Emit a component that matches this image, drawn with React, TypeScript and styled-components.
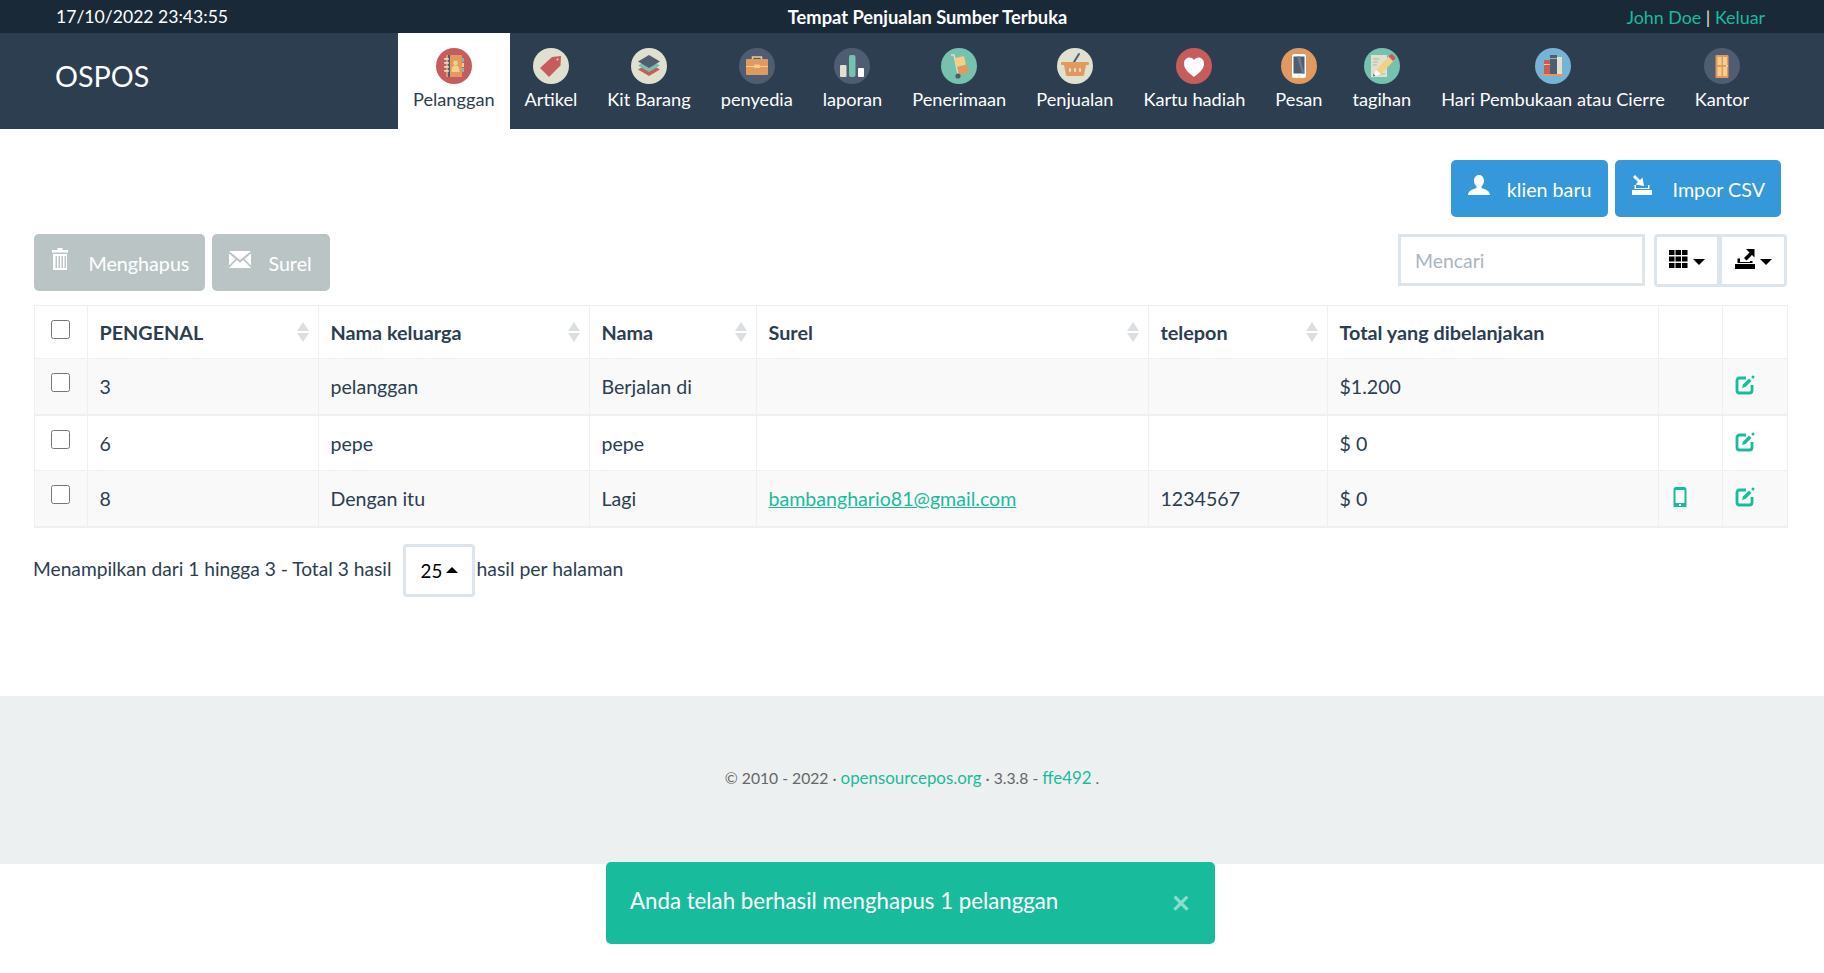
import React, { FunctionComponent, ReactNode } from "react";
import styled, { createGlobalStyle } from "styled-components";

// DATA //
const C = {
    red: "#c75c5c",
    cream: "#e0e0d1",
    slate: "#4f5d73",
    teal: "#76c2af",
    orange: "#e0995e",
    yellow: "#f5cf87",
    blue: "#77b3d4",
    white: "#ffffff",
};

const Badge: FunctionComponent<{ bg: string; children: ReactNode }> = ({ bg, children }) => (
    <svg width="36" height="36" viewBox="0 0 36 36">
        <circle cx="18" cy="18" r="18" fill={bg} />
        {children}
    </svg>
);

const navIcons: { label: string; icon: ReactNode }[] = [
    {
        label: "Pelanggan",
        icon: (
            <Badge bg={C.red}>
                <rect x="25" y="10" width="3" height="4" fill={C.blue} />
                <rect x="25" y="15" width="3" height="4" fill={C.yellow} />
                <rect x="25" y="20" width="3" height="4" fill={C.teal} />
                <rect x="10" y="7" width="16" height="22" rx="1" fill={C.orange} />
                <rect x="12" y="7" width="2" height="22" fill={C.slate} />
                <circle cx="19.5" cy="15" r="2.4" fill={C.yellow} />
                <path d="M15.5 24c0-5 1.5-6.5 4-6.5s4 1.500 4 6.500z" fill={C.yellow} />
                <rect x="8" y="10" width="5" height="1.800" rx=".9" fill={C.cream} />
                <rect x="8" y="14" width="5" height="1.800" rx=".9" fill={C.cream} />
                <rect x="8" y="18" width="5" height="1.800" rx=".9" fill={C.cream} />
                <rect x="8" y="22" width="5" height="1.800" rx=".9" fill={C.cream} />
            </Badge>
        ),
    },
    {
        label: "Artikel",
        icon: (
            <Badge bg={C.cream}>
                <path d="M7 20 19 9l9-1-.5 9.500L16 29z" fill={C.red} />
                <circle cx="24.500" cy="11.500" r="1" fill={C.cream} />
            </Badge>
        ),
    },
    {
        label: "Kit Barang",
        icon: (
            <Badge bg={C.cream}>
                <path d="M7 21.500 18 15l11 6.500L18 28z" fill={C.red} />
                <path d="M7 17.500 18 11l11 6.500L18 24z" fill={C.teal} />
                <path d="M7 13.500 18 7l11 6.500L18 20z" fill={C.slate} />
            </Badge>
        ),
    },
    {
        label: "penyedia",
        icon: (
            <Badge bg={C.slate}>
                <path d="M13.500 12v-3h9v3" fill="none" stroke={C.yellow} strokeWidth="1.500" />
                <rect x="7" y="11" width="22" height="16" rx="1" fill={C.orange} />
                <rect x="7" y="18" width="22" height="1" fill={C.yellow} />
                <rect x="15" y="16.500" width="6" height="3.500" rx="1" fill={C.yellow} />
            </Badge>
        ),
    },
    {
        label: "laporan",
        icon: (
            <Badge bg={C.slate}>
                <rect x="6" y="17" width="6.500" height="12" rx="1" fill={C.cream} />
                <rect x="15" y="7" width="6.500" height="22" rx="2" fill={C.teal} />
                <rect x="24" y="20" width="6" height="9" rx="1" fill={C.white} />
            </Badge>
        ),
    },
    {
        label: "Penerimaan",
        icon: (
            <Badge bg={C.teal}>
                <path d="M10 7h3l4 19" fill="none" stroke={C.cream} strokeWidth="1.300" />
                <rect x="14" y="9" width="10" height="9" rx="1" transform="rotate(-12 19 13)" fill={C.yellow} />
                <rect x="17" y="18" width="10" height="8" rx="1" transform="rotate(-12 22 22)" fill={C.orange} />
                <circle cx="17" cy="28" r="2.600" fill={C.slate} />
            </Badge>
        ),
    },
    {
        label: "Penjualan",
        icon: (
            <Badge bg={C.cream}>
                <path d="M17 14l5-8" stroke={C.slate} strokeWidth="2" strokeLinecap="round" />
                <rect x="4" y="14" width="28" height="3" rx="1" fill={C.orange} />
                <path d="M7 17h22l-2 10a1.500 1.500 0 0 1-1.500 1h-15a1.500 1.500 0 0 1-1.500-1z" fill={C.orange} />
                <rect x="12" y="20" width="2" height="4" rx="1" fill={C.cream} />
                <rect x="17" y="20" width="2" height="4" rx="1" fill={C.cream} />
                <rect x="22" y="20" width="2" height="4" rx="1" fill={C.cream} />
            </Badge>
        ),
    },
    {
        label: "Kartu hadiah",
        icon: (
            <Badge bg={C.red}>
                <path
                    d="M18 29C13 25 8 21.500 8 15.500 8 12 10.500 9.500 13.500 9.500c2 0 3.500 1 4.500 2.500 1-1.500 2.500-2.500 4.500-2.500C25.500 9.500 28 12 28 15.500 28 21.500 23 25 18 29z"
                    fill={C.white}
                />
            </Badge>
        ),
    },
    {
        label: "Pesan",
        icon: (
            <Badge bg={C.orange}>
                <rect x="11" y="6" width="14" height="24" rx="2" fill={C.white} />
                <rect x="12.500" y="8.500" width="11" height="17" fill={C.slate} />
                <path d="M16 8.500h3l4.500 17H21z" fill="#6b7a90" />
                <circle cx="18" cy="28" r=".9" fill={C.cream} />
            </Badge>
        ),
    },
    {
        label: "tagihan",
        icon: (
            <Badge bg={C.teal}>
                <rect x="7" y="7" width="16" height="22" fill={C.cream} />
                <path d="M9 11h6M9 14h5M9 17h4M9 26h12" stroke="#b5b5a5" strokeWidth="1" />
                <path d="M12 22 25 8l5 4.500L17 26z" fill={C.yellow} />
                <path d="M24.500 8.500l2-2a1.500 1.500 0 0 1 2 0l2.500 2.500a1.500 1.500 0 0 1 0 2l-2 2z" fill={C.red} />
                <path d="M12 22l-2.500 6.500L17 26z" fill={C.white} />
                <path d="M9.500 28.500 9 26l2.500 1.500z" fill={C.slate} />
            </Badge>
        ),
    },
    {
        label: "Hari Pembukaan atau Cierre",
        icon: (
            <Badge bg={C.blue}>
                <rect x="9" y="12" width="6" height="14" rx="1" fill={C.red} />
                <rect x="9" y="16" width="6" height="1" fill={C.yellow} />
                <rect x="15" y="7" width="7" height="19" fill={C.slate} />
                <rect x="15" y="10" width="7" height="1" fill={C.teal} />
                <rect x="22" y="9" width="5" height="17" fill={C.cream} />
                <rect x="7" y="26" width="22" height="2" fill={C.orange} />
            </Badge>
        ),
    },
    {
        label: "Kantor",
        icon: (
            <Badge bg={C.slate}>
                <rect x="11.500" y="7" width="13" height="23" rx="1" fill={C.orange} />
                <rect x="13.500" y="9" width="4" height="8" fill={C.yellow} />
                <rect x="19" y="9" width="4" height="8" fill={C.yellow} />
                <rect x="13.500" y="19" width="4" height="9" fill={C.yellow} />
                <rect x="19" y="19" width="4" height="9" fill={C.yellow} />
                <circle cx="23" cy="18" r="1" fill={C.cream} />
            </Badge>
        ),
    },
];

const TrashIcon = () => (
    <svg width="18" height="22" viewBox="0 0 18 22" fill="currentColor">
        <path d="M6.500 0h5v2h5.500v2.500H1V2h5.500z" />
        <path d="M2 6h14v16H2zM4.500 8v12h1.500V8zm3 0v12h1.500V8zm3 0v12H12V8zm3 0v12H15V8z" fillRule="evenodd" />
    </svg>
);
const MailIcon = () => (
    <svg width="22" height="17" viewBox="0 0 22 17" fill="currentColor">
        <path d="M0 0h22L11 9z" />
        <path d="M0 2.500 6.500 8 0 14.500zM22 2.500 15.500 8l6.500 6.500zM7.700 9 11 11.700 14.300 9 22 17H0z" />
    </svg>
);
const UserIcon = () => (
    <svg width="22" height="20" viewBox="0 0 22 20" fill="currentColor">
        <path d="M11 0c3 0 5 2.500 5 5.500 0 2.500-1 4.500-2.500 6v1.500c3 1 8.500 2.500 8.500 7H0c0-4.500 5.500-6 8.500-7v-1.500C7 10 6 8 6 5.500 6 2.500 8 0 11 0z" />
    </svg>
);
const ImportIcon = () => (
    <svg width="20" height="20" viewBox="0 0 20 20" fill="currentColor">
        <path d="M3 0 8 5 10.500 2.500 12 11 3.500 9.500 6 7 1 2z" />
        <path d="M4 10v3h12v-3h1.500v4H2.500v-4zM0 15h20v5H0z" />
    </svg>
);
const GridIcon = () => (
    <svg width="19" height="18" viewBox="0 0 19 18" fill="currentColor">
        {[0, 6.500, 13].map((x) =>
            [0, 6.500, 13].map((y) => <rect key={`${x}-${y}`} x={x} y={y} width="5.500" height="5" />)
        )}
    </svg>
);
const ExportIcon = () => (
    <svg width="20" height="20" viewBox="0 0 20 20" fill="currentColor">
        <path d="M11 0h8.500v8.500L17 6l-5.500 5.500L9 9l5.500-5.500z" />
        <path d="M2.500 9.500H5V13h10v-1h2.500v2H2.500zM0 15h20v5H0z" />
    </svg>
);
const EditIcon = () => (
    <svg width="20" height="20" viewBox="0 0 20 20">
        <path d="M11 3H4.500A2.500 2.500 0 0 0 2 5.500v10A2.500 2.500 0 0 0 4.500 18h10a2.500 2.500 0 0 0 2.500-2.500V10" fill="none" stroke="currentColor" strokeWidth="2.800" />
        <path d="M7 13l1-3.500 6-6 2.500 2.500-6 6z" fill="currentColor" />
        <circle cx="18" cy="2" r="1.500" fill="currentColor" />
    </svg>
);
const PhoneIcon = () => (
    <svg width="14" height="20" viewBox="0 0 14 20">
        <path fillRule="evenodd" fill="currentColor" d="M3 0h8a2.500 2.500 0 0 1 2.500 2.500V20H.5V2.500A2.500 2.500 0 0 1 3 0zM2.500 3v13h9V3zM6 17v2h2v-2z" />
    </svg>
);

const columns = [
    { title: "PENGENAL", width: 231, sort: true },
    { title: "Nama keluarga", width: 271, sort: true },
    { title: "Nama", width: 167, sort: true },
    { title: "Surel", width: 392, sort: true },
    { title: "telepon", width: 179, sort: true },
    { title: "Total yang dibelanjakan", width: 331, sort: false },
];

const rows = [
    { id: "3", last: "pelanggan", first: "Berjalan di", mail: "", phone: "", total: "$1.200" },
    { id: "6", last: "pepe", first: "pepe", mail: "", phone: "", total: "$ 0" },
    { id: "8", last: "Dengan itu", first: "Lagi", mail: "bambanghario81@gmail.com", phone: "1234567", total: "$ 0" },
];

const App: FunctionComponent = () => {
    return (
        <Page>
            <GlobalStyle />
            <TopBar>
                <TopDate>17/10/2022 23:43:55</TopDate>
                <TopTitle>Tempat Penjualan Sumber Terbuka</TopTitle>
                <TopUser>
                    <TealText>John Doe</TealText> | <TealText>Keluar</TealText>
                </TopUser>
            </TopBar>
            <NavBar>
                <Brand>OSPOS</Brand>
                <NavList>
                    {navIcons.map((item, i) => (
                        <NavItem key={item.label} $active={i === 0}>
                            {item.icon}
                            <NavLabel>{item.label}</NavLabel>
                        </NavItem>
                    ))}
                </NavList>
            </NavBar>
            <Main>
                <ActionsRow>
                    <BlueButton $gap={17}>
                        <UserIcon />
                        klien baru
                    </BlueButton>
                    <BlueButton $gap={21}>
                        <ImportIcon />
                        Impor CSV
                    </BlueButton>
                </ActionsRow>
                <Toolbar>
                    <ToolGroup>
                        <GreyButton $gap={19.5}>
                            <TrashIcon />
                            Menghapus
                        </GreyButton>
                        <GreyButton $gap={17} $right={18}>
                            <MailIcon />
                            Surel
                        </GreyButton>
                    </ToolGroup>
                    <ToolGroup>
                        <SearchBox placeholder="Mencari" readOnly />
                        <IconGroup>
                            <IconButton $width={60}>
                                <GridIcon />
                                <Caret />
                            </IconButton>
                            <IconButton $width={67}>
                                <ExportIcon />
                                <Caret />
                            </IconButton>
                        </IconGroup>
                    </ToolGroup>
                </Toolbar>
                <Table>
                    <colgroup>
                        <col width={53} />
                        {columns.map((c) => (
                            <col key={c.title} width={c.width} />
                        ))}
                        <col width={64} />
                        <col width={65} />
                    </colgroup>
                    <thead>
                        <tr>
                            <Th>
                                <Check type="checkbox" />
                            </Th>
                            {columns.map((c) => (
                                <Th key={c.title}>
                                    <HeadInner>
                                        {c.title}
                                        {c.sort && <SortArrows />}
                                    </HeadInner>
                                </Th>
                            ))}
                            <Th />
                            <Th />
                        </tr>
                    </thead>
                    <tbody>
                        {rows.map((row, i) => (
                            <Row key={row.id} $striped={i % 2 === 0}>
                                <Td>
                                    <Check type="checkbox" />
                                </Td>
                                <Td>{row.id}</Td>
                                <Td>{row.last}</Td>
                                <Td>{row.first}</Td>
                                <Td>{row.mail && <MailLink>{row.mail}</MailLink>}</Td>
                                <Td>{row.phone}</Td>
                                <Td>{row.total}</Td>
                                <IconCell $left={14}>{row.phone && <PhoneIcon />}</IconCell>
                                <IconCell $left={12}>
                                    <EditIcon />
                                </IconCell>
                            </Row>
                        ))}
                    </tbody>
                </Table>
                <Pagination>
                    <PageText $size={19.2}>Menampilkan dari 1 hingga 3 - Total 3 hasil</PageText>
                    <PageSize>
                        25
                        <CaretUp />
                    </PageSize>
                    <PageText $size={19.4}>hasil per halaman</PageText>
                </Pagination>
            </Main>
            <Footer>
                © 2010 - 2022 · <FooterLink>opensourcepos.org</FooterLink> · 3.3.8 - <FooterLink>ffe492</FooterLink> .
            </Footer>
            <Toast>
                <ToastText>Anda telah berhasil menghapus 1 pelanggan</ToastText>
                <ToastClose>×</ToastClose>
            </Toast>
        </Page>
    );
};

// STYLED COMPONENTS //
const GlobalStyle = createGlobalStyle`
    html, body {
        margin: 0;
        padding: 0;
        background: #fff;
    }
    body {
        font-family: Lato, "Open Sans", sans-serif;
        font-size: 19.6px;
        color: #2c3e50;
    }
`;
const Page = styled.div`
    position: relative;
    width: 100%;
    height: 973px;
    overflow: hidden;
`;
const TopBar = styled.div`
    height: 33px;
    background: #1a2938;
    color: #fff;
    display: grid;
    grid-template-columns: 1fr auto 1fr;
    align-items: center;
    padding: 0 59px 0 56px;
`;
const TopDate = styled.span`
    font-size: 17.6px;
`;
const TopTitle = styled.span`
    font-weight: 700;
    font-size: 18.3px;
    margin-left: 34px;
`;
const TopUser = styled.span`
    text-align: right;
    font-size: 17.85px;
    color: #e6e6d8;
`;
const TealText = styled.span`
    color: #18bc9c;
`;
const NavBar = styled.div`
    height: 96px;
    background: #2c3e50;
    display: flex;
    align-items: stretch;
`;
const Brand = styled.div`
    width: 398px;
    padding: 27px 0 0 55px;
    box-sizing: border-box;
    color: #fff;
    font-size: 28.7px;
    line-height: 32px;
`;
const NavList = styled.div`
    display: flex;
`;
const NavItem = styled.div<{ $active?: boolean }>`
    display: flex;
    flex-direction: column;
    align-items: center;
    padding: 15px 15px 0;
    font-size: 18.2px;
    background: ${(p) => (p.$active ? "#fff" : "transparent")};
    color: ${(p) => (p.$active ? "#2c3e50" : "#fff")};
`;
const NavLabel = styled.div`
    margin-top: 3px;
    line-height: 24px;
    white-space: nowrap;
`;
const Main = styled.div`
    padding: 31px 37px 0 34px;
    height: 567px;
    box-sizing: border-box;
`;
const ActionsRow = styled.div`
    display: flex;
    justify-content: flex-end;
    gap: 7px;
    padding-right: 6px;
`;
const ButtonBase = styled.div<{ $gap: number; $right?: number }>`
    height: 57px;
    box-sizing: border-box;
    border-radius: 5px;
    color: #fff;
    display: flex;
    align-items: center;
    gap: ${(p) => p.$gap}px;
    padding: 2px ${(p) => p.$right ?? 16}px 0 17px;
    font-size: 19.7px;
    svg {
        margin-top: -9px;
    }
`;
const BlueButton = styled(ButtonBase)`
    background: #3498db;
`;
const GreyButton = styled(ButtonBase)`
    background: #bac4c5;
`;
const Toolbar = styled.div`
    display: flex;
    justify-content: space-between;
    align-items: flex-start;
    margin-top: 17px;
`;
const ToolGroup = styled.div`
    display: flex;
    gap: 7px;
    align-items: flex-start;
`;
const SearchBox = styled.input`
    width: 247px;
    height: 52px;
    box-sizing: border-box;
    border: 3px solid #dce4ec;
    padding: 0 14px;
    font: inherit;
    font-size: 19.4px;
    outline: none;
    color: #2c3e50;
    margin-right: 2px;
    &::placeholder {
        color: #acb6c0;
    }
`;
const IconGroup = styled.div`
    display: flex;
    height: 53px;
    box-sizing: border-box;
    border: 3px solid #dce4ec;
    border-radius: 4px;
`;
const IconButton = styled.div<{ $width: number }>`
    width: ${(p) => p.$width}px;
    box-sizing: border-box;
    display: flex;
    align-items: center;
    justify-content: center;
    gap: 5px;
    color: #000;
    & + & {
        border-left: 5px solid #dce4ec;
    }
    svg {
        margin-top: -3px;
    }
`;
const Caret = styled.i`
    width: 0;
    height: 0;
    border-left: 6px solid transparent;
    border-right: 6px solid transparent;
    border-top: 6px solid #000;
    margin-top: 3px;
`;
const CaretUp = styled.i`
    width: 0;
    height: 0;
    margin-left: 4px;
    border-left: 6px solid transparent;
    border-right: 6px solid transparent;
    border-bottom: 6px solid #000;
`;
const Table = styled.table`
    width: 1753px;
    margin-top: 14px;
    border-collapse: collapse;
    table-layout: fixed;
`;
const Th = styled.th`
    height: 53px;
    box-sizing: border-box;
    border: 1px solid #ecf0f1;
    padding: 0 11px 0 11.500px;
    text-align: left;
    font-weight: 700;
    font-size: 19.8px;
    color: #2c3e50;
    vertical-align: middle;
    &:first-child {
        text-align: center;
        padding: 0 2px 10px 0;
    }
`;
const HeadInner = styled.div`
    display: flex;
    align-items: center;
    justify-content: space-between;
    margin-right: -2px;
`;
const SortArrows = styled.i`
    width: 12px;
    height: 20px;
    flex-shrink: 0;
    position: relative;
    &::before,
    &::after {
        content: "";
        position: absolute;
        left: 0;
        border-left: 6px solid transparent;
        border-right: 6px solid transparent;
    }
    &::before {
        top: 0;
        border-bottom: 9px solid #dcdfe1;
    }
    &::after {
        bottom: 0;
        border-top: 9px solid #dcdfe1;
    }
`;
const Row = styled.tr<{ $striped?: boolean }>`
    background: ${(p) => (p.$striped ? "#f9f9f9" : "#fff")};
    &:first-child td,
    &:last-child td {
        border-bottom: 2px solid #ecf0f1;
    }
`;
const Td = styled.td`
    height: 56px;
    box-sizing: border-box;
    border: 1px solid #ecf0f1;
    padding: 1px 11px 0 11.500px;
    vertical-align: middle;
    color: #2c3e50;
    &:first-child {
        text-align: center;
        padding: 0 2px 12px 0;
    }
`;
const IconCell = styled(Td)<{ $left: number }>`
    color: #18bc9c;
    padding: 0 0 2px ${(p) => p.$left}px;
    svg {
        display: block;
    }
`;
const Check = styled.input`
    width: 19px;
    height: 19px;
    margin: 0;
    vertical-align: middle;
`;
const MailLink = styled.span`
    color: #18bc9c;
    text-decoration: underline;
`;
const Pagination = styled.div`
    display: flex;
    align-items: center;
    margin-top: 16px;
    margin-left: -1px;
`;
const PageText = styled.span<{ $size: number }>`
    font-size: ${(p) => p.$size}px;
    margin-bottom: 3px;
`;
const PageSize = styled.div`
    width: 72px;
    height: 53px;
    margin: 0 1px 0 12px;
    box-sizing: border-box;
    border: 3px solid #dce4ec;
    border-radius: 4px;
    display: flex;
    align-items: center;
    justify-content: center;
    font-size: 18.750px;
    color: #000;
`;
const Footer = styled.div`
    height: 168px;
    box-sizing: border-box;
    background: #ecf0f1;
    padding-top: 71px;
    text-align: center;
    font-size: 15.7px;
    color: #666;
`;
const FooterLink = styled.span`
    color: #18bc9c;
    font-size: 16.900px;
`;
const Toast = styled.div`
    position: absolute;
    left: 606px;
    top: 862px;
    width: 609px;
    height: 82px;
    box-sizing: border-box;
    background: #18bc9c;
    border-radius: 5px;
    color: #fff;
    padding: 0 25px 0 24px;
    display: flex;
    align-items: center;
    justify-content: space-between;
`;
const ToastText = styled.span`
    font-size: 22.25px;
    margin-bottom: 5px;
`;
const ToastClose = styled.span`
    font-size: 32px;
    font-weight: 700;
    line-height: 1;
    margin-bottom: 2px;
    opacity: 0.5;
    color: #fff;
`;

export default App;
